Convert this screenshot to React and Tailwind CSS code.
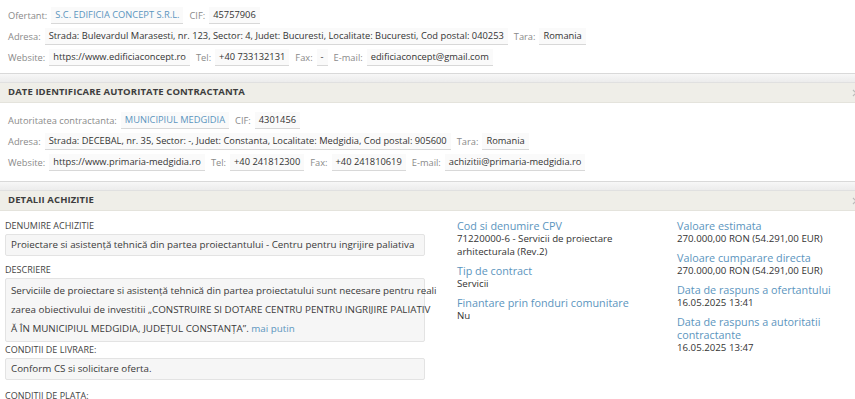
import React from 'react';

const font = { fontFamily: '"Open Sans", "DejaVu Sans", sans-serif' };

const Val = ({ children, blue }) => (
  <span className={`px-[4px] pt-[1px] pb-[2px] bg-[#fafafa] border-b border-[#d8d8d8] text-[9.3px] ${blue ? 'text-[#5b95be]' : 'text-[#333]'}`}>
    {children}
  </span>
);

const Lbl = ({ children }) => <span className="text-[9.3px] text-[#8a8a8a] mr-[4px] ml-[6px] first:ml-0">{children}</span>;

const Row = ({ children }) => <div className="flex items-center h-[21px] pl-[8px] whitespace-nowrap">{children}</div>;

const Header = ({ title }) => (
  <div>
    <div className="h-[10px] border-t border-[#d9d9d9] bg-gradient-to-b from-[#f7f7f7] to-[#ececec] border-b border-b-[#e0e0e0]" />
    <div className="h-[20px] bg-[#efeee8] flex items-center justify-between pl-[8px] border-b border-[#e4e3dc]">
      <span className="text-[9.5px] font-bold text-[#3d3d3d] tracking-[0.1px]">{title}</span>
      <svg width="6" height="8" viewBox="0 0 6 8" className="-mr-[3px]"><path d="M1 1 L4 4 L1 7" stroke="#bbb" strokeWidth="1.2" fill="none" /></svg>
    </div>
  </div>
);

const Label = ({ children, cls }) => (
  <div className={`text-[9px] text-[#444] uppercase h-[12px] leading-[12px] ${cls || ''}`}>{children}</div>
);

const Box = ({ children, cls }) => (
  <div className={`mt-[2px] bg-[#f6f6f6] border border-[#e3e3e3] rounded-[2px] px-[5px] text-[9.8px] text-[#3a3a3a] whitespace-nowrap ${cls || ''}`}>{children}</div>
);

const Info = ({ title, children }) => (
  <div className="mb-[6px]">
    <div className="text-[10.8px] text-[#5b95be] leading-[13px]">{title}</div>
    <div className="text-[9.7px] text-[#333] leading-[13px]">{children}</div>
  </div>
);

export default function App() {
  return (
    <div style={font} className="w-[855px] h-[399px] overflow-hidden bg-white">
      <div className="pt-[5px] pb-[5px]">
        <Row><Lbl>Ofertant:</Lbl><Val blue>S.C. EDIFICIA CONCEPT S.R.L.</Val><Lbl>CIF:</Lbl><Val>45757906</Val></Row>
        <Row><Lbl>Adresa:</Lbl><Val>Strada: Bulevardul Marasesti, nr. 123, Sector: 4, Judet: Bucuresti, Localitate: Bucuresti, Cod postal: 040253</Val><Lbl>Tara:</Lbl><Val>Romania</Val></Row>
        <Row><Lbl>Website:</Lbl><Val>https://www.edificiaconcept.ro</Val><Lbl>Tel:</Lbl><Val>+40 733132131</Val><Lbl>Fax:</Lbl><Val>-</Val><Lbl>E-mail:</Lbl><Val>edificiaconcept@gmail.com</Val></Row>
      </div>
      <Header title="DATE IDENTIFICARE AUTORITATE CONTRACTANTA" />
      <div className="pt-[7px] pb-[8px]">
        <Row><Lbl>Autoritatea contractanta:</Lbl><Val blue>MUNICIPIUL MEDGIDIA</Val><Lbl>CIF:</Lbl><Val>4301456</Val></Row>
        <Row><Lbl>Adresa:</Lbl><Val>Strada: DECEBAL, nr. 35, Sector: -, Judet: Constanta, Localitate: Medgidia, Cod postal: 905600</Val><Lbl>Tara:</Lbl><Val>Romania</Val></Row>
        <Row><Lbl>Website:</Lbl><Val>https://www.primaria-medgidia.ro</Val><Lbl>Tel:</Lbl><Val>+40 241812300</Val><Lbl>Fax:</Lbl><Val>+40 241810619</Val><Lbl>E-mail:</Lbl><Val>achizitii@primaria-medgidia.ro</Val></Row>
      </div>
      <Header title="DETALII ACHIZITIE" />
      <div className="flex">
        <div className="w-[420px] ml-[5px] pt-[9px]">
          <Label>Denumire achizitie</Label>
          <Box cls="h-[22px] flex items-center">
            Proiectare si asistență tehnică din partea proiectantului - Centru pentru ingrijire paliativa
          </Box>
          <Label cls="mt-[8px]">Descriere</Label>
          <Box cls="h-[64px] pt-[2px] leading-[19px]">
            Serviciile de proiectare si asistență tehnică din partea proiectatului sunt necesare pentru reali<br />
            zarea obiectivului de investitii „CONSTRUIRE SI DOTARE CENTRU PENTRU INGRIJIRE PALIATIV<br />
            Ă ÎN MUNICIPIUL MEDGIDIA, JUDEȚUL CONSTANȚA”. <span className="text-[#5b95be]">mai putin</span>
          </Box>
          <Label cls="mt-[2px]">Conditii de livrare:</Label>
          <Box cls="h-[22px] flex items-center">
            Conform CS si solicitare oferta.
          </Box>
          <Label cls="mt-[10px]">Conditii de plata:</Label>
        </div>
        <div className="w-[220px] ml-[32px] pt-[8px]">
          <Info title="Cod si denumire CPV">71220000-6 - Servicii de proiectare<br />arhitecturala (Rev.2)</Info>
          <Info title="Tip de contract">Servicii</Info>
          <Info title="Finantare prin fonduri comunitare">Nu</Info>
        </div>
        <div className="w-[178px] pt-[8px]">
          <Info title="Valoare estimata">270.000,00 RON (54.291,00 EUR)</Info>
          <Info title="Valoare cumparare directa">270.000,00 RON (54.291,00 EUR)</Info>
          <Info title="Data de raspuns a ofertantului">16.05.2025 13:41</Info>
          <Info title="Data de raspuns a autoritatii contractante">16.05.2025 13:47</Info>
        </div>
      </div>
    </div>
  );
}
